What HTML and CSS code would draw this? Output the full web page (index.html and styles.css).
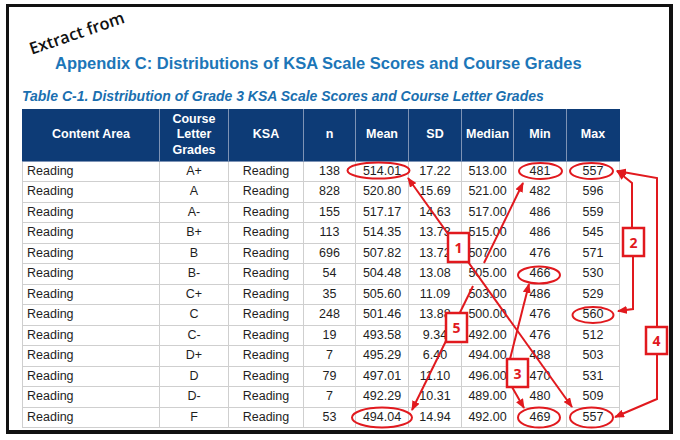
FILE: index.html
```html
<!DOCTYPE html>
<html>
<head>
<meta charset="utf-8">
<link rel="stylesheet" href="styles.css">
</head>
<body>
<div class="frame">
  <h1 class="title">Appendix C: Distributions of KSA Scale Scores and Course Grades</h1>
  <h2 class="subtitle">Table C-1. Distribution of Grade 3 KSA Scale Scores and Course Letter Grades</h2>
  <table class="dist">
    <colgroup>
      <col class="c-area"><col class="c-grade"><col class="c-ksa"><col class="c-n">
      <col class="c-num"><col class="c-num"><col class="c-n"><col class="c-num"><col class="c-num">
    </colgroup>
    <thead>
      <tr>
        <th>Content Area</th><th>Course<br>Letter<br>Grades</th><th>KSA</th><th>n</th>
        <th>Mean</th><th>SD</th><th>Median</th><th>Min</th><th>Max</th>
      </tr>
    </thead>
    <tbody>
      <tr><td>Reading</td><td>A+</td><td>Reading</td><td>138</td><td>514.01</td><td>17.22</td><td>513.00</td><td>481</td><td>557</td></tr>
      <tr><td>Reading</td><td>A</td><td>Reading</td><td>828</td><td>520.80</td><td>15.69</td><td>521.00</td><td>482</td><td>596</td></tr>
      <tr><td>Reading</td><td>A-</td><td>Reading</td><td>155</td><td>517.17</td><td>14.63</td><td>517.00</td><td>486</td><td>559</td></tr>
      <tr><td>Reading</td><td>B+</td><td>Reading</td><td>113</td><td>514.35</td><td>13.73</td><td>515.00</td><td>486</td><td>545</td></tr>
      <tr><td>Reading</td><td>B</td><td>Reading</td><td>696</td><td>507.82</td><td>13.72</td><td>507.00</td><td>476</td><td>571</td></tr>
      <tr><td>Reading</td><td>B-</td><td>Reading</td><td>54</td><td>504.48</td><td>13.08</td><td>505.00</td><td>466</td><td>530</td></tr>
      <tr><td>Reading</td><td>C+</td><td>Reading</td><td>35</td><td>505.60</td><td>11.09</td><td>503.00</td><td>486</td><td>529</td></tr>
      <tr><td>Reading</td><td>C</td><td>Reading</td><td>248</td><td>501.46</td><td>13.88</td><td>500.00</td><td>476</td><td>560</td></tr>
      <tr><td>Reading</td><td>C-</td><td>Reading</td><td>19</td><td>493.58</td><td>9.34</td><td>492.00</td><td>476</td><td>512</td></tr>
      <tr><td>Reading</td><td>D+</td><td>Reading</td><td>7</td><td>495.29</td><td>6.40</td><td>494.00</td><td>488</td><td>503</td></tr>
      <tr><td>Reading</td><td>D</td><td>Reading</td><td>79</td><td>497.01</td><td>11.10</td><td>496.00</td><td>470</td><td>531</td></tr>
      <tr><td>Reading</td><td>D-</td><td>Reading</td><td>7</td><td>492.29</td><td>10.31</td><td>489.00</td><td>480</td><td>509</td></tr>
      <tr><td>Reading</td><td>F</td><td>Reading</td><td>53</td><td>494.04</td><td>14.94</td><td>492.00</td><td>469</td><td>557</td></tr>
    </tbody>
  </table>
</div>

<div class="stamp">Extract from</div>

<svg class="marks" width="680" height="440" viewBox="0 0 680 440">
  <defs>
    <marker id="ah" markerUnits="userSpaceOnUse" markerWidth="10" markerHeight="8" refX="9" refY="4" orient="auto-start-reverse">
      <path d="M0,0 L10,4 L0,8 Z" fill="#e1191e"/>
    </marker>
  </defs>
  <g fill="none" stroke="#e1191e" stroke-width="2">
    <ellipse cx="378.5" cy="170.5" rx="31" ry="8"/>
    <ellipse cx="540.5" cy="171" rx="21.5" ry="8"/>
    <ellipse cx="591.5" cy="171" rx="21.5" ry="8"/>
    <ellipse cx="539" cy="275" rx="21" ry="8.5"/>
    <ellipse cx="593" cy="315" rx="20.5" ry="8"/>
    <ellipse cx="382" cy="417.5" rx="30" ry="10"/>
    <ellipse cx="539" cy="417.5" rx="21" ry="10"/>
    <ellipse cx="591.5" cy="417.5" rx="21.5" ry="10"/>

    <line x1="408" y1="178" x2="572" y2="407" marker-start="url(#ah)" marker-end="url(#ah)"/>
    <line x1="523" y1="183" x2="484" y2="263" marker-start="url(#ah)"/>
    <line x1="473" y1="286" x2="412" y2="410" marker-end="url(#ah)"/>
    <line x1="510" y1="359" x2="529" y2="284" marker-end="url(#ah)"/>
    <line x1="512" y1="387" x2="524" y2="408" marker-end="url(#ah)"/>
    <polyline points="633,256 633,309 618,311" marker-end="url(#ah)"/>
    <polyline points="632,228 632,183 617,171" marker-end="url(#ah)"/>
    <polyline points="657,327 657,178 617,171" marker-end="url(#ah)"/>
    <polyline points="657,354 657,399 615,417" marker-end="url(#ah)"/>
  </g>
  <g class="tag">
    <rect x="448" y="233" width="21" height="29"/>
    <text x="458.5" y="253">1</text>
    <rect x="623" y="228" width="21" height="28"/>
    <text x="633.5" y="247.5">2</text>
    <rect x="507" y="359" width="21" height="28"/>
    <text x="517.5" y="378.5">3</text>
    <rect x="646" y="327" width="21" height="27"/>
    <text x="656.5" y="346">4</text>
    <rect x="446" y="313" width="21" height="29"/>
    <text x="456.5" y="333">5</text>
  </g>
</svg>
</body>
</html>
```
FILE: styles.css
```css
html, body {
  margin: 0;
  padding: 0;
  background: #ffffff;
}
body {
  position: relative;
  width: 680px;
  height: 440px;
  overflow: hidden;
  font-family: "Liberation Sans", Arial, sans-serif;
}
.frame {
  box-sizing: border-box;
  margin: 4px 0 0 6px;
  width: 667px;
  height: 430px;
  border-style: solid;
  border-color: #111111;
  border-width: 3px 4px 4px 3px;
  padding: 0 0 0 13px;
  display: flex;
  flex-direction: column;
  align-items: flex-start;
}
.title {
  margin: 46px 0 0 33px;
  font-size: 16.5px;
  line-height: 20px;
  font-weight: bold;
  color: #1c76b8;
  white-space: nowrap;
}
.subtitle {
  margin: 15px 0 0 0;
  font-size: 14px;
  line-height: 17px;
  font-weight: bold;
  font-style: italic;
  color: #1a6fb0;
  white-space: nowrap;
}
.dist {
  margin-top: 3.5px;
  border-collapse: collapse;
  table-layout: fixed;
  width: 597px;
  font-size: 12.5px;
  color: #1e1e1e;
}
.c-area { width: 137px; }
.c-grade { width: 69px; }
.c-ksa { width: 75px; }
.c-n { width: 52px; }
.c-num { width: 53px; }
.dist th {
  height: 51px;
  padding: 0;
  background: #0d3b76;
  color: #ffffff;
  font-weight: bold;
  font-size: 12.5px;
  line-height: 15.5px;
  border: 1px solid #7d93b5;
  border-top-color: #0d3b76;
  vertical-align: middle;
  text-align: center;
}
.dist th:first-child { border-left-color: #0d3b76; }
.dist th:last-child { border-right-color: #0d3b76; }
.dist td {
  height: 19.5px;
  padding: 0;
  line-height: 15px;
  border: 1px solid #cfcfcf;
  text-align: center;
  vertical-align: middle;
  white-space: nowrap;
}
.dist td:first-child {
  text-align: left;
  padding-left: 4px;
}
.stamp {
  position: absolute;
  left: 27px;
  top: 23px;
  font-family: "Open Sans", sans-serif;
  font-size: 16.5px;
  font-weight: 600;
  line-height: 20px;
  color: #111111;
  white-space: nowrap;
  transform: rotate(-19deg);
  transform-origin: 50% 50%;
}
.marks {
  position: absolute;
  left: 0;
  top: 0;
  pointer-events: none;
}
.tag rect {
  fill: #ffffff;
  stroke: #e1191e;
  stroke-width: 2.5;
}
.tag text {
  fill: #e1191e;
  font-family: "Open Sans", sans-serif;
  font-weight: 700;
  font-size: 14px;
  text-anchor: middle;
}
```
